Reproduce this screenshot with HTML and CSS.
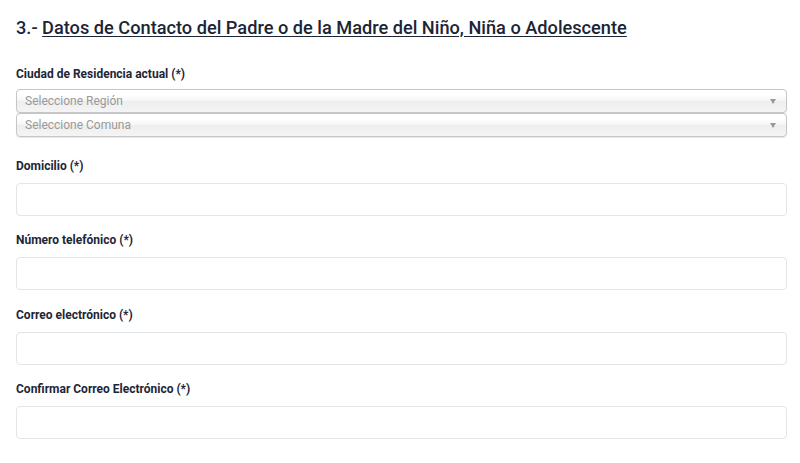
FILE: index.html
```html
<!DOCTYPE html>
<html lang="es">
<head>
    <meta charset="UTF-8">
    <meta name="viewport" content="width=device-width, initial-scale=1.0">
    <title>Datos de Contacto</title>
    <link rel="stylesheet" href="styles.css">
</head>
<body>

    <div class="contact-form">
        <h3>3.- <u>Datos de Contacto del Padre o de la Madre del Niño, Niña o Adolescente</u></h3>

        <div class="field field-city">
            <label>Ciudad de Residencia actual (*)</label>
            <div class="chosen">
                <span>Seleccione Región</span>
                <b class="arrow"></b>
            </div>
            <div class="chosen">
                <span>Seleccione Comuna</span>
                <b class="arrow"></b>
            </div>
        </div>

        <div class="field">
            <label for="domicilio">Domicilio (*)</label>
            <input type="text" id="domicilio" name="domicilio">
        </div>

        <div class="field">
            <label for="telefono">Número telefónico (*)</label>
            <input type="text" id="telefono" name="telefono">
        </div>

        <div class="field field-mail">
            <label for="correo">Correo electrónico (*)</label>
            <input type="email" id="correo" name="correo">
        </div>

        <div class="field">
            <label for="correo2">Confirmar Correo Electrónico (*)</label>
            <input type="email" id="correo2" name="correo2">
        </div>
    </div>

</body>
</html>
```

FILE: styles.css
```css
body {
    font-family: Roboto, "Liberation Sans", Arial, sans-serif;
    background-color: #fff;
    margin: 0;
    color: #1d2636;
}

.contact-form {
    padding: 17px 13px 0 16px;
}

.contact-form h3 {
    font-size: 18.2px;
    font-weight: 500;
    line-height: 21px;
    margin: 0 0 29px;
    color: #1b2536;
}

.contact-form h3 u {
    text-underline-offset: 2px;
}

.field {
    margin-bottom: 17px;
}

.field label {
    display: block;
    font-size: 12px;
    font-weight: 700;
    line-height: 15px;
    margin-bottom: 9px;
    color: #1d2636;
}

.field-city {
    margin-bottom: 22px;
}

.field-city label {
    margin-bottom: 7px;
}

.field-mail {
    padding-top: 1px;
}

.chosen {
    position: relative;
    height: 22px;
    line-height: 22px;
    padding-left: 8px;
    font-size: 12px;
    color: #999;
    border: 1px solid #c6c6c6;
    border-radius: 4px;
    background: linear-gradient(#fff 20%, #f6f6f6 50%, #eee 52%, #f4f4f4 100%);
    box-shadow: 0 1px 1px rgba(0, 0, 0, 0.1);
}

.chosen .arrow {
    position: absolute;
    right: 10px;
    top: 9px;
    width: 0;
    height: 0;
    border-left: 3px solid transparent;
    border-right: 3px solid transparent;
    border-top: 5px solid #999;
}

.field input {
    display: block;
    box-sizing: border-box;
    width: 100%;
    height: 33px;
    border: 1px solid #e2e5e9;
    border-radius: 4px;
    font-family: inherit;
    font-size: 13px;
    padding: 0 10px;
}
```
